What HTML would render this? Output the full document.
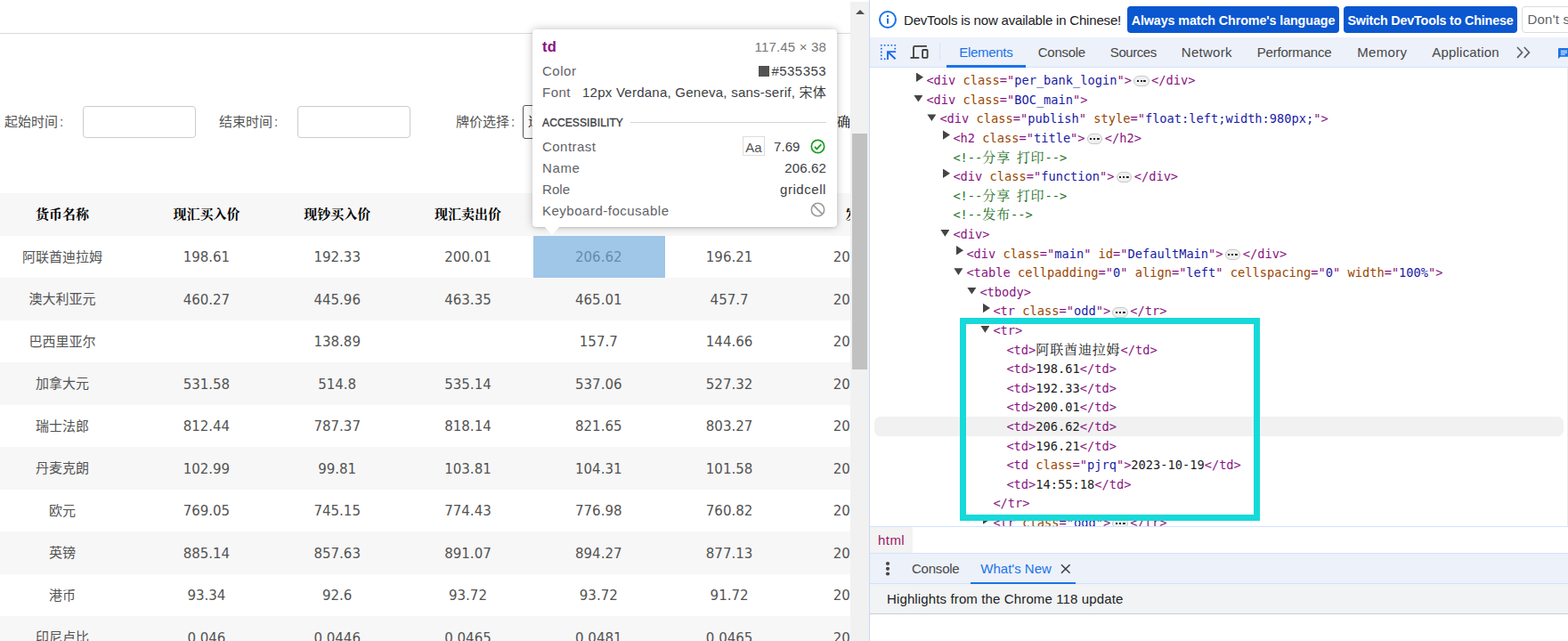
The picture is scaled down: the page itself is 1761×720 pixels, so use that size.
<!DOCTYPE html>
<html lang="zh-CN"><head><meta charset="utf-8"><title>BOC DevTools</title>
<style>
*{box-sizing:border-box;margin:0;padding:0}
html,body{width:1761px;height:720px;overflow:hidden;background:#fff}
body{position:relative;font-family:"Liberation Sans","Noto Sans CJK SC",sans-serif}
#page{position:absolute;left:0;top:0;width:955px;height:720px;overflow:hidden;background:#fff}
.topline{position:absolute;left:0;top:37px;width:955px;height:1px;background:#d9d9d9}
.lbl{position:absolute;top:127px;font:15px/20px "Liberation Sans","Noto Sans CJK SC",sans-serif;color:#535353;white-space:nowrap}
.lbl i{font-style:normal;margin-left:2px}
.inp{position:absolute;top:119px;width:127px;height:36px;border:1px solid #ccc;border-radius:4px;background:#fff}
.sel{position:absolute;left:587px;top:118px;width:140px;height:38px;border:1px solid #555;border-radius:3px;overflow:hidden}
.sel span{position:absolute;left:5px;top:8px;font:15px/20px "Liberation Serif","Noto Serif CJK SC",serif;color:#000;white-space:nowrap}
.btnfrag{position:absolute;left:940px;top:127px;font:15px/20px "Liberation Serif","Noto Serif CJK SC",serif;color:#000;white-space:nowrap}
#tbl{position:absolute;left:-18.5px;top:217px;border-collapse:collapse;table-layout:fixed;width:1261.6px}
#tbl th,#tbl td{height:47.5px;padding:0;text-align:center;vertical-align:middle;white-space:nowrap;overflow:hidden}
#tbl th{font:bold 15px/20px "Liberation Serif","Noto Serif CJK SC",serif;color:#000}
#tbl td{padding-top:2px;font:15px/20px "DejaVu Sans","Noto Sans CJK SC",sans-serif;color:#535353}
#tbl td.cn{padding-top:1px;font-family:"Liberation Sans","Noto Sans CJK SC",sans-serif}
#tbl tr.hd,#tbl tr.g{background:#f7f7f7}
.hl{position:absolute;left:598.7px;top:264.6px;width:148.3px;height:47.4px;background:rgba(111,168,220,.66)}
#tip{position:absolute;left:598px;top:33px;width:342px;height:222px;background:#fff;border-radius:4px;box-shadow:0 0 10px rgba(0,0,0,.26),0 1px 2px rgba(0,0,0,.1)}
#tip .arrow{position:absolute;left:14px;top:222px;width:0;height:0;border-left:8.5px solid transparent;border-right:8.5px solid transparent;border-top:9px solid #fff}
#tip .t{position:absolute;font:15px/20px "Liberation Sans","Noto Sans CJK SC",sans-serif;white-space:nowrap}
#tip .r{right:12px}
#tip .tag{color:#881280;font-weight:bold;font-size:16.5px;letter-spacing:.2px}
#tip .dim{color:#777}
#tip .k{color:#5f6368}
#tip .v{color:#3c4043}
#tip .sw{position:absolute;left:254px;top:41px;width:11.5px;height:11.5px;background:#535353}
#tip .acc{position:absolute;left:11px;top:97px;font:12px/16px "Liberation Sans",sans-serif;color:#3c4043;-webkit-text-stroke:.35px #3c4043}
#tip .accline{position:absolute;left:110px;top:104px;width:220px;height:1px;background:#d5d5d5}
#tip .aa{position:absolute;left:236px;top:120px;width:25px;height:22px;border:1px solid #ddd;font:15px/23px "Liberation Sans",sans-serif;color:#535353;text-align:center}
#tip .ic{position:absolute}
#sb{position:absolute;left:955px;top:2px;width:21px;height:718px;background:#f1f1f1}
#sb .up{position:absolute;left:5.5px;top:8.5px;width:0;height:0;border-left:5px solid transparent;border-right:5px solid transparent;border-bottom:5.5px solid #505050}
#sb .thumb{position:absolute;left:2px;top:148px;width:17px;height:265px;background:#c1c1c1}
#dt{position:absolute;left:976px;top:0;width:785px;height:720px;background:#fff;border-left:1px solid #c9d8f3;overflow:hidden;font:15px/20px "Liberation Sans",sans-serif;color:#202124}
#info{position:absolute;left:0;top:0;width:785px;height:42px;background:#fff}
#info .inf{position:absolute;left:9.3px;top:11.4px}
#info .msg{position:absolute;left:38px;top:13px;white-space:nowrap;color:#202124}
#info .bt{position:absolute;top:7px;height:30px;border-radius:4px;font:bold 14.3px/32.5px "Liberation Sans",sans-serif;white-space:nowrap;color:#fff;background:#0b57d0;text-align:center}
#info .b1{left:289px;width:238px}
#info .b2{left:532px;width:195px}
#info .b3{left:732px;width:160px;background:#fff;border:1px solid #dadce0;color:#5f6368;line-height:28.5px;text-align:left;padding-left:5.5px;font-weight:normal;font-size:15px}
#tabs{position:absolute;left:0;top:42px;width:785px;height:34px;background:#edf1fa;border-bottom:1px solid #d3e3fd}
#tabs .i1{position:absolute;left:10px;top:6px}
#tabs .i2{position:absolute;left:43px;top:6px}
#tabs .dv{position:absolute;left:78px;top:6px;width:1px;height:19.5px;background:#d3e3fd}
.tab{position:absolute;top:7px;margin-left:-1.7px;white-space:nowrap;color:#474747;font:15px/20px "Liberation Sans",sans-serif}
.tab.act{color:#1a73e8}
#tabs .more{position:absolute;left:725.7px;top:9.5px}
#tabs .ul{position:absolute;left:86px;top:31px;width:89px;height:2.5px;background:#1a73e8}
#tabs .chat{position:absolute;left:773.2px;top:12.3px}
#tree{position:absolute;left:0;top:76px;width:784px;height:515px;overflow:hidden;background:#fff}
.ln{position:absolute;left:0;width:785px;height:21.6px}
.code{position:absolute;top:0;white-space:pre;font:13.68px/21.6px "DejaVu Sans Mono","Noto Serif CJK SC",monospace}
.cj{font-family:"Noto Serif CJK SC",serif;font-size:15px;line-height:1;letter-spacing:.85px;word-spacing:2px}
.tg{color:#881280}.an{color:#994500}.av{color:#1a1aa6}.cm{color:#236e25}.tx{color:#202124}
.el{display:inline-block;width:17.8px;height:12px;margin:0 2.4px 0 2px;border:1px solid #c8c8c8;border-radius:6px;background:linear-gradient(#202124,#202124) 2.6px 4px/2.2px 2.2px no-repeat,linear-gradient(#202124,#202124) 6.6px 4px/2.2px 2.2px no-repeat,linear-gradient(#202124,#202124) 10.4px 4px/2.8px 2.2px no-repeat,#f0f0f0;vertical-align:-2.4px}
.ar{position:absolute;width:0;height:0}
.ar.r{top:1.5px;width:8px;height:10.4px;background:#444;clip-path:polygon(0 0,100% 50%,0 100%)}
.ar.d{top:5.2px;width:10px;height:7.6px;background:#444;clip-path:polygon(0 0,100% 0,50% 100%)}
.selrow{position:absolute;left:4.5px;width:774.5px;height:22px;background:#f1f1f1;border-radius:6.5px}
.edge{position:absolute;right:0;top:0;width:1.5px;height:515px;background:#ebebeb}
.cyan{position:absolute;left:101px;top:281px;width:337px;height:228px;border:7px solid #17d9d9}
#crumb{position:absolute;left:0;top:591px;width:785px;height:31px;background:#fff;border-top:1px solid #d3e3fd;border-bottom:1px solid #d3e3fd}
#crumb .bc{position:absolute;left:0;top:0;width:48px;height:29px;background:#f3f3f3;color:#9a1868;font:15px/30px "Liberation Sans",sans-serif;padding-left:9px;letter-spacing:.45px}
#drawer{position:absolute;left:0;top:622px;width:785px;height:34px;background:#edf1fa;border-bottom:1px solid #d3e3fd}
#drawer .kebab{position:absolute;left:17.4px;top:8.4px}
#drawer .x{position:absolute;left:214px;top:11px}
#drawer .ul{position:absolute;left:112.6px;top:31.5px;width:118px;height:2.2px;background:#1a73e8}
#wn{position:absolute;left:0;top:656px;width:785px;height:34px;background:#f1f3f4;border-bottom:1px solid #cbcdd1}
#wn span{position:absolute;left:19px;top:7px;white-space:nowrap;color:#202124}

</style></head><body>
<div id="page">
<div class="topline"></div>
<span class="lbl" style="left:5px">起始时间<i>:</i></span><div class="inp" style="left:93px"></div>
<span class="lbl" style="left:246px">结束时间<i>:</i></span><div class="inp" style="left:334px"></div>
<span class="lbl" style="left:512px">牌价选择<i>:</i></span><div class="sel"><span>选择货币</span></div>
<div class="btnfrag">确定</div>
<table id="tbl"><colgroup><col style="width:177px"><col style="width:146.8px"><col style="width:146.8px"><col style="width:146.8px"><col style="width:146.8px"><col style="width:146.8px"><col style="width:173.6px"><col style="width:177px"></colgroup>
<tr class="hd"><th>货币名称</th><th>现汇买入价</th><th>现钞买入价</th><th>现汇卖出价</th><th>现钞卖出价</th><th>中行折算价</th><th>发布日期</th><th>发布时间</th></tr>
<tr><td class="cn">阿联酋迪拉姆</td><td>198.61</td><td>192.33</td><td>200.01</td><td>206.62</td><td>196.21</td><td>2023-10-19</td><td>14:55:18</td></tr>
<tr class="g"><td class="cn">澳大利亚元</td><td>460.27</td><td>445.96</td><td>463.35</td><td>465.01</td><td>457.7</td><td>2023-10-19</td><td>14:55:18</td></tr>
<tr><td class="cn">巴西里亚尔</td><td></td><td>138.89</td><td></td><td>157.7</td><td>144.66</td><td>2023-10-19</td><td>14:55:18</td></tr>
<tr class="g"><td class="cn">加拿大元</td><td>531.58</td><td>514.8</td><td>535.14</td><td>537.06</td><td>527.32</td><td>2023-10-19</td><td>14:55:18</td></tr>
<tr><td class="cn">瑞士法郎</td><td>812.44</td><td>787.37</td><td>818.14</td><td>821.65</td><td>803.27</td><td>2023-10-19</td><td>14:55:18</td></tr>
<tr class="g"><td class="cn">丹麦克朗</td><td>102.99</td><td>99.81</td><td>103.81</td><td>104.31</td><td>101.58</td><td>2023-10-19</td><td>14:55:18</td></tr>
<tr><td class="cn">欧元</td><td>769.05</td><td>745.15</td><td>774.43</td><td>776.98</td><td>760.82</td><td>2023-10-19</td><td>14:55:18</td></tr>
<tr class="g"><td class="cn">英镑</td><td>885.14</td><td>857.63</td><td>891.07</td><td>894.27</td><td>877.13</td><td>2023-10-19</td><td>14:55:18</td></tr>
<tr><td class="cn">港币</td><td>93.34</td><td>92.6</td><td>93.72</td><td>93.72</td><td>91.72</td><td>2023-10-19</td><td>14:55:18</td></tr>
<tr class="g"><td class="cn">印尼卢比</td><td>0.046</td><td>0.0446</td><td>0.0465</td><td>0.0481</td><td>0.0465</td><td>2023-10-19</td><td>14:55:18</td></tr>
</table>
<div class="hl"></div>
<div id="tip">
<div class="arrow"></div>
<span class="t tag" style="left:11px;top:9.4px">td</span><span class="t r dim fit0" style="top:10px;letter-spacing:0.178px">117.45 × 38</span>
<span class="t k fit1" style="left:11px;top:37px;letter-spacing:0.528px">Color</span><span class="sw"></span><span class="t r v fit2" style="top:37px;letter-spacing:0.442px">#535353</span>
<span class="t k fit3" style="left:11px;top:61px;letter-spacing:0.496px">Font</span><span class="t r v fit4" style="top:61px;letter-spacing:0.246px">12px Verdana, Geneva, sans-serif, 宋体</span>
<span class="acc fit5" style="letter-spacing:0.125px">ACCESSIBILITY</span><div class="accline"></div>
<span class="t k fit6" style="left:11px;top:121.5px;letter-spacing:0.475px">Contrast</span><span class="aa">Aa</span><span class="t v fit7" style="left:271px;top:121.5px;letter-spacing:0.074px">7.69</span>
<svg class="ic" style="left:312px;top:123px" width="17" height="17" viewBox="0 0 17 17"><circle cx="8.5" cy="8.5" r="7.2" fill="none" stroke="#1a9c1e" stroke-width="1.7"/><path d="M4.9 8.9l2.5 2.5 4.9-5.3" fill="none" stroke="#1a9c1e" stroke-width="1.8"/></svg>
<span class="t k fit8" style="left:11px;top:145.5px;letter-spacing:0.621px">Name</span><span class="t r v fit9" style="top:145.5px;letter-spacing:0.152px">206.62</span>
<span class="t k fit10" style="left:11px;top:169.5px;letter-spacing:0.085px">Role</span><span class="t r v fit11" style="top:169.5px;letter-spacing:0.559px">gridcell</span>
<span class="t k fit12" style="left:11px;top:193.5px;letter-spacing:0.504px">Keyboard-focusable</span>
<svg class="ic" style="left:312px;top:194px" width="17" height="17" viewBox="0 0 17 17"><circle cx="8.5" cy="8.5" r="7.2" fill="none" stroke="#9a9a9a" stroke-width="1.6"/><path d="M3.6 3.6l9.8 9.8" fill="none" stroke="#9a9a9a" stroke-width="1.6"/></svg>
</div>
</div>
<div id="sb"><div class="up"></div><div class="thumb"></div></div>
<div id="dt">
<div id="info">
<svg class="inf" width="22" height="22" viewBox="0 0 22 22"><circle cx="11" cy="11" r="9" fill="none" stroke="#1a73e8" stroke-width="2"/><rect x="10" y="9.6" width="2" height="6" fill="#1a73e8"/><rect x="10" y="6" width="2" height="2" fill="#1a73e8"/></svg>
<span class="msg fit13" style="letter-spacing:-0.188px">DevTools is now available in Chinese!</span>
<span class="bt b1"><span class=" fit14" style="letter-spacing:-0.098px">Always match Chrome's language</span></span>
<span class="bt b2"><span class=" fit15" style="letter-spacing:-0.169px">Switch DevTools to Chinese</span></span>
<span class="bt b3"><span class=" fit16" style="letter-spacing:0.212px">Don't show again</span></span>
</div>
<div id="tabs">
<svg class="i1" width="22" height="22" viewBox="0 0 22 22"><rect x="1.90" y="1.90" width="1.8" height="1.8" rx=".6" fill="#1a6cf0"/><rect x="5.76" y="1.90" width="1.8" height="1.8" rx=".6" fill="#1a6cf0"/><rect x="9.62" y="1.90" width="1.8" height="1.8" rx=".6" fill="#1a6cf0"/><rect x="13.48" y="1.90" width="1.8" height="1.8" rx=".6" fill="#1a6cf0"/><rect x="17.34" y="1.90" width="1.8" height="1.8" rx=".6" fill="#1a6cf0"/><rect x="1.90" y="5.76" width="1.8" height="1.8" rx=".6" fill="#1a6cf0"/><rect x="1.90" y="9.62" width="1.8" height="1.8" rx=".6" fill="#1a6cf0"/><rect x="1.90" y="13.48" width="1.8" height="1.8" rx=".6" fill="#1a6cf0"/><rect x="1.90" y="17.34" width="1.8" height="1.8" rx=".6" fill="#1a6cf0"/><rect x="17.34" y="5.76" width="1.8" height="1.8" rx=".6" fill="#1a6cf0"/><rect x="5.76" y="17.34" width="1.8" height="1.8" rx=".6" fill="#1a6cf0"/><path d="M19.1 10.1H10V19" fill="none" stroke="#1a6cf0" stroke-width="1.9"/><path d="M10.2 10.3l8.4 7.9" fill="none" stroke="#1a6cf0" stroke-width="2.1"/></svg>
<svg class="i2" width="24" height="20" viewBox="0 0 24 20"><path d="M20.9 3.95H7.6Q6 3.95 6 5.5V16.4" fill="none" stroke="#3c3c3c" stroke-width="1.8"/><path d="M2.5 16.9H12.3" fill="none" stroke="#3c3c3c" stroke-width="1.8"/><rect x="16.1" y="8" width="5.5" height="8.9" rx=".8" fill="none" stroke="#3c3c3c" stroke-width="1.8"/></svg>
<div class="dv"></div>
<span class="tab act fit17" style="left:102px;letter-spacing:-0.316px">Elements</span>
<span class="tab fit18" style="left:190.5px;letter-spacing:-0.292px">Console</span>
<span class="tab fit19" style="left:271.5px;letter-spacing:-0.433px">Sources</span>
<span class="tab fit20" style="left:351.5px;letter-spacing:0.283px">Network</span>
<span class="tab fit21" style="left:436.5px;letter-spacing:-0.216px">Performance</span>
<span class="tab fit22" style="left:549px;letter-spacing:0.305px">Memory</span>
<span class="tab fit23" style="left:633px;letter-spacing:0.192px">Application</span>
<svg class="more" width="16" height="14" viewBox="0 0 16 14"><path d="M1 1l5.6 5.9L1 12.8M8.8 1l5.6 5.9-5.6 5.9" fill="none" stroke="#5f6368" stroke-width="1.7"/></svg>
<div class="ul"></div>
<svg class="chat" width="16" height="14" viewBox="0 0 16 14"><path d="M0 1.2Q0 0 1.2 0H16v9.7H2.4L0 12z" fill="#1a73e8"/><path d="M2.8 3.2h7.2M2.8 5.2h7.2M2.8 7.2h5" stroke="#fff" stroke-width="1"/></svg>
</div>
<div id="tree">
<div class="ln" style="top:4.1px"><i class="ar r" style="left:52.0px"></i><span class="code" style="left:63.4px"><span class="tg">&lt;div</span> <span class="an">class</span><span class="tg">=</span><span class="tg">"</span><span class="av">per_bank_login</span><span class="tg">"</span><span class="tg">&gt;</span><span class="el"></span><span class="tg">&lt;/div</span><span class="tg">&gt;</span></span></div>
<div class="ln" style="top:25.7px"><i class="ar d" style="left:49.4px"></i><span class="code" style="left:63.4px"><span class="tg">&lt;div</span> <span class="an">class</span><span class="tg">=</span><span class="tg">"</span><span class="av">BOC_main</span><span class="tg">"</span><span class="tg">&gt;</span></span></div>
<div class="ln" style="top:47.3px"><i class="ar d" style="left:64.4px"></i><span class="code" style="left:78.4px"><span class="tg">&lt;div</span> <span class="an">class</span><span class="tg">=</span><span class="tg">"</span><span class="av">publish</span><span class="tg">"</span> <span class="an">style</span><span class="tg">=</span><span class="tg">"</span><span class="av">float:left;width:980px;</span><span class="tg">"</span><span class="tg">&gt;</span></span></div>
<div class="ln" style="top:68.9px"><i class="ar r" style="left:82.0px"></i><span class="code" style="left:93.4px"><span class="tg">&lt;h2</span> <span class="an">class</span><span class="tg">=</span><span class="tg">"</span><span class="av">title</span><span class="tg">"</span><span class="tg">&gt;</span><span class="el"></span><span class="tg">&lt;/h2</span><span class="tg">&gt;</span></span></div>
<div class="ln" style="top:90.5px"><span class="code" style="left:93.4px"><span class="cm">&lt;!--<span class="cj">分享 打印</span>--&gt;</span></span></div>
<div class="ln" style="top:112.1px"><i class="ar r" style="left:82.0px"></i><span class="code" style="left:93.4px"><span class="tg">&lt;div</span> <span class="an">class</span><span class="tg">=</span><span class="tg">"</span><span class="av">function</span><span class="tg">"</span><span class="tg">&gt;</span><span class="el"></span><span class="tg">&lt;/div</span><span class="tg">&gt;</span></span></div>
<div class="ln" style="top:133.7px"><span class="code" style="left:93.4px"><span class="cm">&lt;!--<span class="cj">分享 打印</span>--&gt;</span></span></div>
<div class="ln" style="top:155.3px"><span class="code" style="left:93.4px"><span class="cm">&lt;!--<span class="cj">发布</span>--&gt;</span></span></div>
<div class="ln" style="top:176.9px"><i class="ar d" style="left:79.4px"></i><span class="code" style="left:93.4px"><span class="tg">&lt;div</span><span class="tg">&gt;</span></span></div>
<div class="ln" style="top:198.5px"><i class="ar r" style="left:97.0px"></i><span class="code" style="left:108.4px"><span class="tg">&lt;div</span> <span class="an">class</span><span class="tg">=</span><span class="tg">"</span><span class="av">main</span><span class="tg">"</span> <span class="an">id</span><span class="tg">=</span><span class="tg">"</span><span class="av">DefaultMain</span><span class="tg">"</span><span class="tg">&gt;</span><span class="el"></span><span class="tg">&lt;/div</span><span class="tg">&gt;</span></span></div>
<div class="ln" style="top:220.1px"><i class="ar d" style="left:94.4px"></i><span class="code" style="left:108.4px"><span class="tg">&lt;table</span> <span class="an">cellpadding</span><span class="tg">=</span><span class="tg">"</span><span class="av">0</span><span class="tg">"</span> <span class="an">align</span><span class="tg">=</span><span class="tg">"</span><span class="av">left</span><span class="tg">"</span> <span class="an">cellspacing</span><span class="tg">=</span><span class="tg">"</span><span class="av">0</span><span class="tg">"</span> <span class="an">width</span><span class="tg">=</span><span class="tg">"</span><span class="av">100%</span><span class="tg">"</span><span class="tg">&gt;</span></span></div>
<div class="ln" style="top:241.7px"><i class="ar d" style="left:109.4px"></i><span class="code" style="left:123.4px"><span class="tg">&lt;tbody</span><span class="tg">&gt;</span></span></div>
<div class="ln" style="top:263.3px"><i class="ar r" style="left:127.0px"></i><span class="code" style="left:138.4px"><span class="tg">&lt;tr</span> <span class="an">class</span><span class="tg">=</span><span class="tg">"</span><span class="av">odd</span><span class="tg">"</span><span class="tg">&gt;</span><span class="el"></span><span class="tg">&lt;/tr</span><span class="tg">&gt;</span></span></div>
<div class="ln" style="top:284.9px"><i class="ar d" style="left:124.4px"></i><span class="code" style="left:138.4px"><span class="tg">&lt;tr</span><span class="tg">&gt;</span></span></div>
<div class="ln" style="top:306.5px"><span class="code" style="left:153.4px"><span class="tg">&lt;td</span><span class="tg">&gt;</span><span class="tx cj">阿联酋迪拉姆</span><span class="tg">&lt;/td</span><span class="tg">&gt;</span></span></div>
<div class="ln" style="top:328.1px"><span class="code" style="left:153.4px"><span class="tg">&lt;td</span><span class="tg">&gt;</span><span class="tx">198.61</span><span class="tg">&lt;/td</span><span class="tg">&gt;</span></span></div>
<div class="ln" style="top:349.7px"><span class="code" style="left:153.4px"><span class="tg">&lt;td</span><span class="tg">&gt;</span><span class="tx">192.33</span><span class="tg">&lt;/td</span><span class="tg">&gt;</span></span></div>
<div class="ln" style="top:371.3px"><span class="code" style="left:153.4px"><span class="tg">&lt;td</span><span class="tg">&gt;</span><span class="tx">200.01</span><span class="tg">&lt;/td</span><span class="tg">&gt;</span></span></div>
<div class="selrow" style="top:392.0px"></div>
<div class="ln" style="top:392.9px"><span class="code" style="left:153.4px"><span class="tg">&lt;td</span><span class="tg">&gt;</span><span class="tx">206.62</span><span class="tg">&lt;/td</span><span class="tg">&gt;</span></span></div>
<div class="ln" style="top:414.5px"><span class="code" style="left:153.4px"><span class="tg">&lt;td</span><span class="tg">&gt;</span><span class="tx">196.21</span><span class="tg">&lt;/td</span><span class="tg">&gt;</span></span></div>
<div class="ln" style="top:436.1px"><span class="code" style="left:153.4px"><span class="tg">&lt;td</span> <span class="an">class</span><span class="tg">=</span><span class="tg">"</span><span class="av">pjrq</span><span class="tg">"</span><span class="tg">&gt;</span><span class="tx">2023-10-19</span><span class="tg">&lt;/td</span><span class="tg">&gt;</span></span></div>
<div class="ln" style="top:457.7px"><span class="code" style="left:153.4px"><span class="tg">&lt;td</span><span class="tg">&gt;</span><span class="tx">14:55:18</span><span class="tg">&lt;/td</span><span class="tg">&gt;</span></span></div>
<div class="ln" style="top:479.3px"><span class="code" style="left:138.4px"><span class="tg">&lt;/tr</span><span class="tg">&gt;</span></span></div>
<div class="ln" style="top:500.9px"><i class="ar r" style="left:127.0px"></i><span class="code" style="left:138.4px"><span class="tg">&lt;tr</span> <span class="an">class</span><span class="tg">=</span><span class="tg">"</span><span class="av">odd</span><span class="tg">"</span><span class="tg">&gt;</span><span class="el"></span><span class="tg">&lt;/tr</span><span class="tg">&gt;</span></span></div>
<div class="cyan"></div><div class="edge"></div>
</div>
<div id="crumb"><span class="bc">html</span></div>
<div id="drawer">
<svg class="kebab" width="6" height="18" viewBox="0 0 6 18"><circle cx="3" cy="3" r="2.1" fill="#474747"/><circle cx="3" cy="8.8" r="2.1" fill="#474747"/><circle cx="3" cy="14.5" r="2.1" fill="#474747"/></svg>
<span class="tab fit24" style="left:48.7px;letter-spacing:-0.221px">Console</span>
<span class="tab act fit25" style="left:126px;letter-spacing:-0.006px">What's New</span>
<svg class="x" width="12" height="12" viewBox="0 0 12 12"><path d="M1 1.2l9.6 9.6M10.6 1.2L1 10.8" stroke="#3c4043" stroke-width="1.6" fill="none"/></svg>
<div class="ul"></div>
</div>
<div id="wn"><span class=" fit26" style="letter-spacing:0.130px">Highlights from the Chrome 118 update</span></div>
</div>
</body></html>
